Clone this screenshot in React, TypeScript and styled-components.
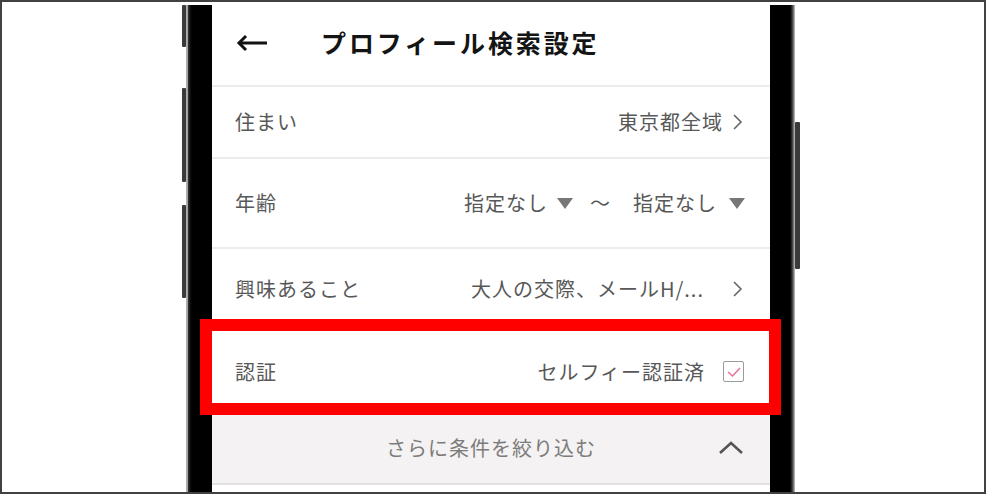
import styled, { createGlobalStyle } from "styled-components"

const GlobalStyle = createGlobalStyle`
  html, body {
    margin: 0;
    padding: 0;
    background: #ffffff;
  }
  body {
    font-family: "Noto Sans CJK JP", "Noto Sans", sans-serif;
  }
`

const BackArrow = () => (
  <svg width="32" height="18" viewBox="0 0 32 18">
    <path d="M3 9 H31" stroke="#111" strokeWidth="3" fill="none" />
    <path d="M10 2 L3 9 L10 16" stroke="#111" strokeWidth="3" fill="none" />
  </svg>
)

const ChevronRight = () => (
  <svg width="16" height="18" viewBox="0 0 16 18">
    <polyline points="5,2 12,9 5,16" stroke="#666" strokeWidth="1.6" fill="none" />
  </svg>
)

const ChevronUp = () => (
  <svg width="26" height="14" viewBox="0 0 26 14">
    <polyline points="2,12 13,2 24,12" stroke="#555" strokeWidth="2.6" fill="none" />
  </svg>
)

const Triangle = () => (
  <svg width="16" height="11" viewBox="0 0 16 11">
    <polygon points="0,0 16,0 8,11" fill="#777" />
  </svg>
)

const CheckMark = () => (
  <svg width="18" height="18" viewBox="0 0 18 18">
    <polyline points="3,9 7.5,13 15,5" stroke="#e8709a" strokeWidth="1.5" fill="none" />
  </svg>
)

const App = () => {
  return (
    <>
      <GlobalStyle />
      <Frame>
        <LeftKeys>
          <SideKey $h={42} />
          <SideKey $h={94} $top={41} />
          <SideKey $h={93} $top={23} />
        </LeftKeys>
        <LeftBezel />
        <Screen>
          <Header>
            <BackArrow />
            <Title>プロフィール検索設定</Title>
          </Header>

          <Row $h={72}>
            <Label>住まい</Label>
            <Value>
              <span>東京都全域</span>
              <Gap $w={6} />
              <ChevronRight />
            </Value>
          </Row>

          <Row $h={90}>
            <Label>年齢</Label>
            <Value>
              <span>指定なし</span>
              <Gap $w={9} />
              <Triangle />
              <Gap $w={17} />
              <span>〜</span>
              <Gap $w={22} />
              <span>指定なし</span>
              <Gap $w={12} />
              <Triangle />
            </Value>
          </Row>

          <Row $h={81}>
            <Label>興味あること</Label>
            <Value>
              <span>大人の交際、メールH/...</span>
              <Gap $w={25} />
              <ChevronRight />
            </Value>
          </Row>

          <Row $h={83} $last>
            <Label>認証</Label>
            <Value>
              <span>セルフィー認証済</span>
              <Gap $w={18} />
              <CheckBox>
                <CheckMark />
              </CheckBox>
            </Value>
            <Highlight />
          </Row>

          <MoreBar>
            <MoreText>さらに条件を絞り込む</MoreText>
            <MoreIcon>
              <ChevronUp />
            </MoreIcon>
          </MoreBar>
        </Screen>
        <RightBezel />
        <RightKeys>
          <SideKey $h={147} $top={120} $w={5} />
        </RightKeys>
      </Frame>
    </>
  )
}

export default App

const Frame = styled.div`
  position: relative;
  box-sizing: border-box;
  width: 986px;
  height: 494px;
  border: 2px solid #414141;
  padding-left: 180px;
  display: flex;
  align-items: stretch;
  overflow: hidden;
  background: #ffffff;
`

const LeftKeys = styled.div`
  width: 4px;
  display: flex;
  flex-direction: column;
  padding-top: 3px;
`

const RightKeys = styled.div`
  width: 5px;
  display: flex;
  flex-direction: column;
`

const SideKey = styled.div<{ $h: number; $top?: number; $w?: number }>`
  width: ${(p) => p.$w ?? 4}px;
  height: ${(p) => p.$h}px;
  margin-top: ${(p) => p.$top ?? 0}px;
  background: #3b3b3b;
  border-radius: 1px;
`

const LeftBezel = styled.div`
  width: 26px;
  margin-top: 3px;
  background: linear-gradient(
    90deg,
    #b4b4b4 0px,
    #9c9c9c 2px,
    #3a3a3a 2px,
    #111 4px,
    #000 6px
  );
`

const RightBezel = styled.div`
  width: 25px;
  margin-top: 3px;
  background: linear-gradient(
    90deg,
    #000 0px,
    #000 20px,
    #333 22px,
    #8a8a8a 24px,
    #cfcfcf 25px
  );
`

const Screen = styled.div`
  width: 558px;
  display: flex;
  flex-direction: column;
  background: #ffffff;
`

const Header = styled.div`
  box-sizing: border-box;
  height: 85px;
  display: flex;
  align-items: center;
  gap: 53px;
  padding: 0 0 2px 24px;
  border-bottom: 2px solid #ececec;
`

const Title = styled.h1`
  margin: 0;
  font-size: 25px;
  line-height: 1;
  font-weight: 700;
  letter-spacing: 2.9px;
  color: #141414;
`

const Row = styled.div<{ $h: number; $last?: boolean }>`
  position: relative;
  box-sizing: border-box;
  height: ${(p) => p.$h}px;
  display: flex;
  align-items: center;
  justify-content: space-between;
  padding: 0 25px 0 23px;
  border-bottom: ${(p) => (p.$last ? "none" : "2px solid #ececec")};
`

const Label = styled.span`
  font-size: 20px;
  line-height: 1;
  letter-spacing: 1px;
  color: #585858;
`

const Value = styled.div`
  display: flex;
  align-items: center;
  font-size: 20px;
  line-height: 1;
  letter-spacing: 1px;
  color: #585858;
`

const Gap = styled.span<{ $w: number }>`
  display: inline-block;
  width: ${(p) => p.$w}px;
`

const CheckBox = styled.span`
  box-sizing: border-box;
  width: 21px;
  height: 21px;
  border: 1.5px solid #9a9a9a;
  border-radius: 2px;
  display: flex;
  align-items: center;
  justify-content: center;
  margin-right: 1px;
`

const Highlight = styled.div`
  position: absolute;
  z-index: 2;
  top: -11px;
  bottom: -2px;
  left: -12px;
  right: -11px;
  border: 12px solid #ff0000;
  pointer-events: none;
`

const MoreBar = styled.div`
  position: relative;
  box-sizing: border-box;
  height: 72px;
  display: flex;
  align-items: center;
  justify-content: center;
  background: #f4f2f2;
  border-bottom: 2px solid #e3e1e1;
`

const MoreText = styled.span`
  font-size: 20px;
  line-height: 1;
  letter-spacing: 1px;
  color: #7c7c7c;
`

const MoreIcon = styled.span`
  position: absolute;
  right: 26px;
  top: 50%;
  transform: translateY(-50%);
  display: flex;
`
